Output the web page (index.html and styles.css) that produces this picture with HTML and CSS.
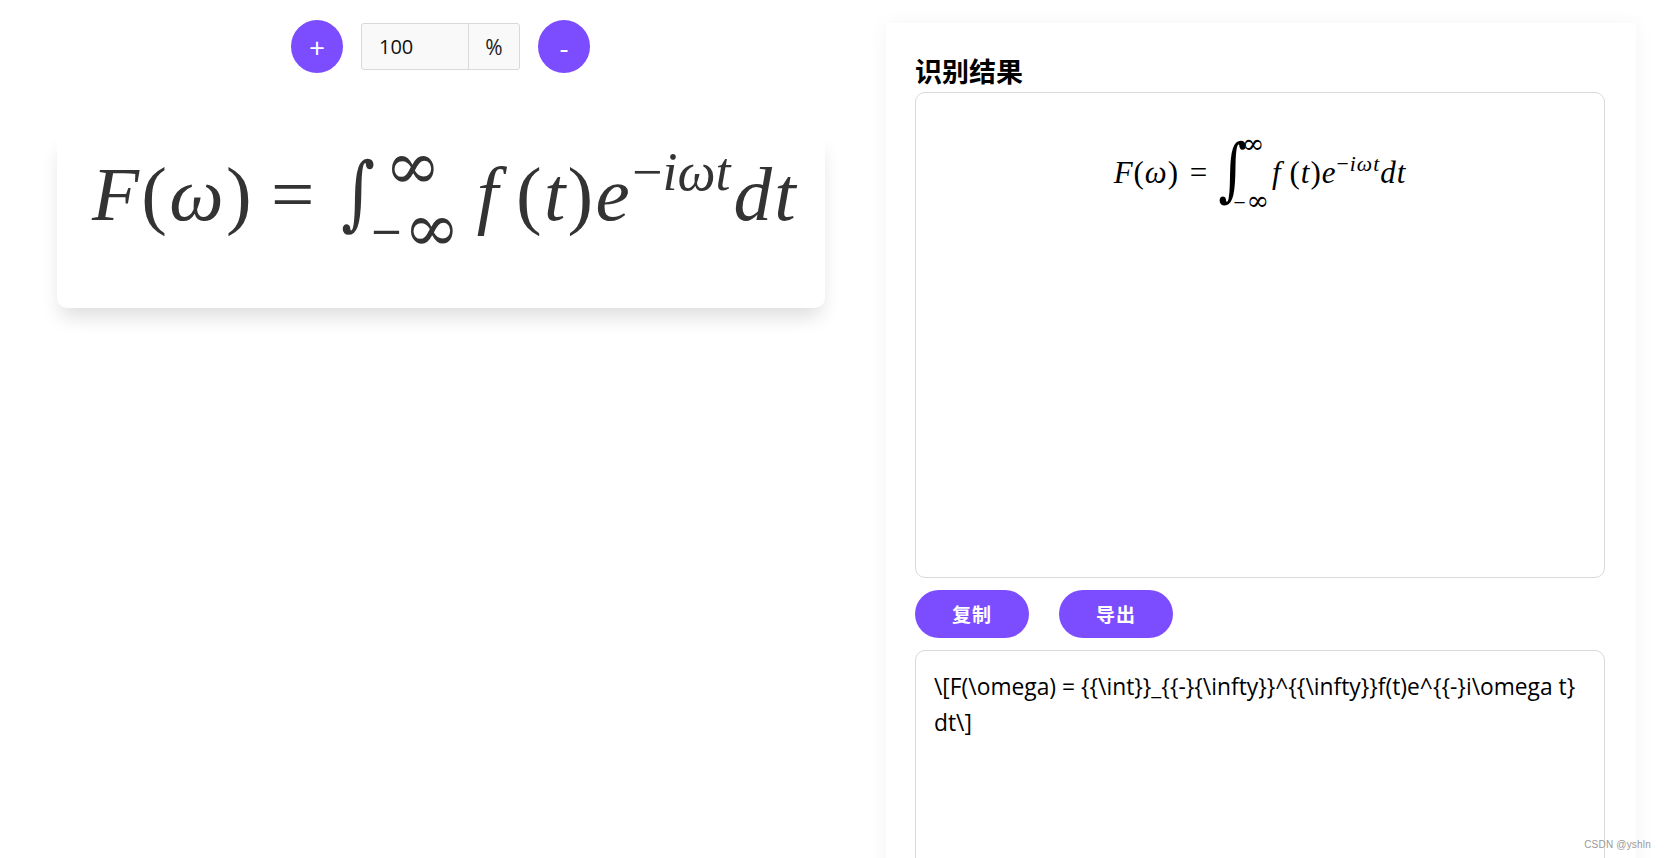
FILE: index.html
```html
<!DOCTYPE html>
<html lang="zh-CN">
<head>
    <meta charset="UTF-8">
    <meta name="viewport" content="width=device-width, initial-scale=1.0">
    <title>识别结果</title>
    <link rel="stylesheet" href="styles.css">
</head>
<body>

<div class="page">
    <div class="left">
        <div class="zoom-bar">
            <button type="button" class="round-btn">+</button>
            <div class="zoom-field">
                <input type="text" class="zoom-input" value="100">
                <span class="zoom-unit">%</span>
            </div>
            <button type="button" class="round-btn">-</button>
        </div>
        <div class="image-card">
            <div class="formula formula-big">
                <i>F</i><span>(</span><i>ω</i><span>)</span><span class="rel">=</span><span class="int">∫</span><span class="limits"><span>∞</span><span><small>−</small>∞</span></span><i class="fn">f</i><span>(</span><i>t</i><span>)</span><i>e</i><sup>−<i>iωt</i></sup><i>dt</i>
            </div>
        </div>
    </div>

    <div class="panel">
        <h2 class="panel-title">识别结果</h2>
        <div class="preview">
            <div class="formula formula-small">
                <i>F</i><span>(</span><i>ω</i><span>)</span><span class="rel">=</span><span class="int">∫</span><span class="limits"><span>∞</span><span><small>−</small>∞</span></span><i class="fn">f</i><span>(</span><i>t</i><span>)</span><i>e</i><sup>−<i>iωt</i></sup><i>dt</i>
            </div>
        </div>
        <div class="actions">
            <button type="button" class="pill-btn">复制</button>
            <button type="button" class="pill-btn">导出</button>
        </div>
        <textarea class="latex-box" spellcheck="false">\[F(\omega) = {{\int}}_{{-}{\infty}}^{{\infty}}f(t)e^{{-}i\omega t} dt\]</textarea>
    </div>
</div>

<div class="watermark">CSDN @yshln</div>

</body>
</html>
```

FILE: styles.css
```css
html, body {
    height: 100%;
    overflow: hidden;
}

body {
    margin: 0;
    background-color: #ffffff;
    color: #000000;
    font-family: "Open Sans", "Noto Sans CJK SC", sans-serif;
}

.page {
    display: flex;
    height: 100%;
}

/* left side */
.left {
    width: 882px;
    display: flex;
    flex-direction: column;
    align-items: center;
}

.zoom-bar {
    display: flex;
    align-items: center;
    gap: 18px;
    margin-top: 20px;
    margin-right: 1px;
}

.round-btn {
    width: 52px;
    height: 53px;
    padding: 0;
    border: none;
    border-radius: 50%;
    background-color: #7c4dff;
    color: #ffffff;
    font-family: "Open Sans", sans-serif;
    font-size: 28px;
    line-height: 1;
    cursor: pointer;
}

.zoom-field {
    display: flex;
    width: 159px;
    height: 47px;
    box-sizing: border-box;
    border: 1px solid #d9d9d9;
    border-radius: 3px;
    background-color: #f9f9f9;
}

.zoom-input {
    width: 107px;
    box-sizing: border-box;
    padding: 0 17px;
    border: none;
    border-right: 1px solid #d9d9d9;
    background: transparent;
    font-family: "Open Sans", sans-serif;
    font-size: 20px;
    color: #111111;
}

.zoom-unit {
    flex: 1;
    display: flex;
    align-items: center;
    justify-content: center;
    font-size: 21px;
    color: #222222;
}

.image-card {
    width: 768px;
    height: 173px;
    margin-top: 62px;
    box-sizing: border-box;
    padding-top: 7px;
    border-radius: 0 0 10px 10px;
    background-color: #ffffff;
    box-shadow: 0 12px 20px -4px rgba(0, 0, 0, 0.14);
}

/* formula, sizes in em so both copies share the markup */
.formula {
    display: flex;
    align-items: baseline;
    font-family: "Liberation Serif", "DejaVu Serif", serif;
    letter-spacing: 0.03em;
    white-space: nowrap;
}

.formula sup {
    font-size: 0.7em;
    line-height: 0;
    letter-spacing: 0;
    position: relative;
    top: -0.55em;
    vertical-align: baseline;
}

.rel {
    margin: 0 0.28em 0 0.22em;
}

.int {
    font-family: "DejaVu Serif", serif;
    transform: scaleX(0.8);
}

.limits {
    display: flex;
    flex-direction: column;
    align-self: flex-start;
    font-family: "DejaVu Serif", serif;
    font-size: 0.875em;
    line-height: 0.9;
    letter-spacing: 0;
}

.limits small {
    font-size: 0.6em;
    vertical-align: 0.15em;
}

.limits span:first-child {
    margin-left: 0.22em;
}

.fn {
    margin-right: 0.2em;
}

.formula-big {
    margin-left: 35px;
    font-size: 77px;
    line-height: 100px;
    color: #333333;
    filter: blur(0.4px);
}

.formula-big .int {
    font-size: 81px;
    letter-spacing: -0.13em;
}

.formula-big .limits {
    gap: 1px;
    margin-top: -6px;
}

.formula-big .fn {
    margin-left: 17px;
}

.formula-big sup {
    margin-right: 3px;
}

.formula-small {
    justify-content: center;
    padding-top: 33px;
    font-size: 31px;
    line-height: 66px;
}

.formula-small .rel {
    margin-left: 0.35em;
}

.formula-small .int {
    font-size: 69px;
    letter-spacing: -0.29em;
    transform: translateY(10px) scaleX(0.8);
}

.formula-small .limits {
    gap: 33px;
    margin-top: 6px;
}

.formula-small .limits span:first-child {
    margin-left: 0.33em;
}

.formula-small .fn {
    margin-left: 3px;
    margin-right: 8px;
}

.formula-small sup {
    letter-spacing: 0.05em;
}

/* right side */
.panel {
    width: 750px;
    height: 1000px;
    margin-top: 23px;
    margin-left: 4px;
    box-sizing: border-box;
    padding: 30px 31px 0 29px;
    background-color: #ffffff;
    box-shadow: 0 2px 20px rgba(0, 0, 0, 0.05);
}

.panel-title {
    margin: 0 0 4px;
    font-family: "Noto Sans CJK SC", sans-serif;
    font-size: 27px;
    line-height: 35px;
    font-weight: 700;
}

.preview {
    height: 486px;
    box-sizing: border-box;
    border: 1px solid #d9d9d9;
    border-radius: 10px;
}

.actions {
    display: flex;
    gap: 30px;
    margin: 12px 0;
}

.pill-btn {
    width: 114px;
    height: 48px;
    padding: 0 0 2px;
    border: none;
    border-radius: 24px;
    background-color: #7c4dff;
    color: #ffffff;
    font-family: "Noto Sans CJK SC", sans-serif;
    font-size: 19px;
    font-weight: 700;
    letter-spacing: 1px;
    cursor: pointer;
}

.latex-box {
    display: block;
    width: 100%;
    height: 300px;
    box-sizing: border-box;
    padding: 18px;
    border: 1px solid #d9d9d9;
    border-radius: 10px;
    font-family: "Open Sans", sans-serif;
    font-size: 22.8px;
    line-height: 36px;
    color: #000000;
    resize: none;
    outline: none;
}

.watermark {
    position: absolute;
    right: 15px;
    bottom: 8px;
    font-family: "Liberation Sans", sans-serif;
    font-size: 10px;
    letter-spacing: 0.2px;
    color: #999999;
}
```
